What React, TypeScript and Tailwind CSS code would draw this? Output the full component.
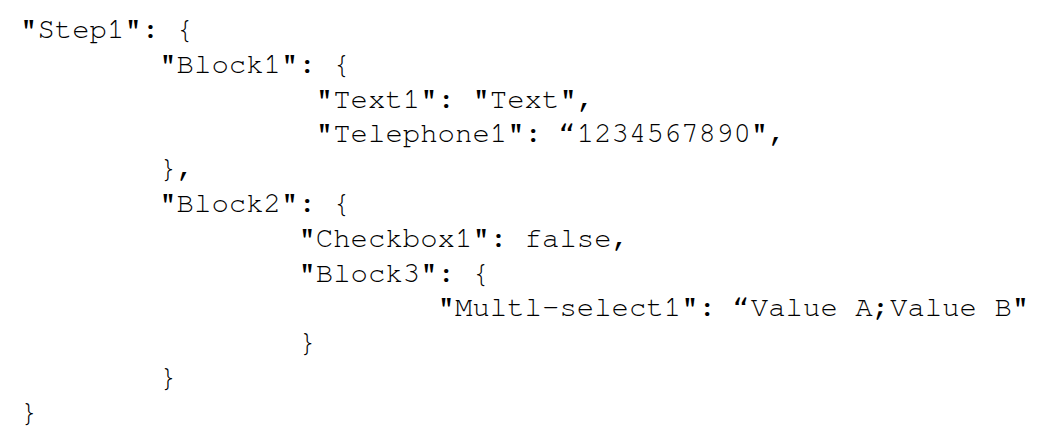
import React from "react";

const lines = [
  '"Step1": {',
  '        "Block1": {',
  '                 "Text1": "Text",',
  '                 "Telephone1": \u201C1234567890",',
  '        },',
  '        "Block2": {',
  '                "Checkbox1": false,',
  '                "Block3": {',
  '                        "Multl-select1": \u201CValue A;Value B"',
  '                }',
  '        }',
  '}',
];

export default function App() {
  return (
    <div className="w-[1055px] h-[448px] bg-white overflow-hidden">
      <pre className="pl-[20px] pt-[13px] text-black text-[29px] leading-[34.8px] font-['Nimbus_Mono_PS','Nimbus_Mono_L','FreeMono','Courier_New','Courier','Liberation_Mono',monospace] whitespace-pre m-0">
        {lines.map((l, i) => (
          <div key={i}>{l}</div>
        ))}
      </pre>
    </div>
  );
}
